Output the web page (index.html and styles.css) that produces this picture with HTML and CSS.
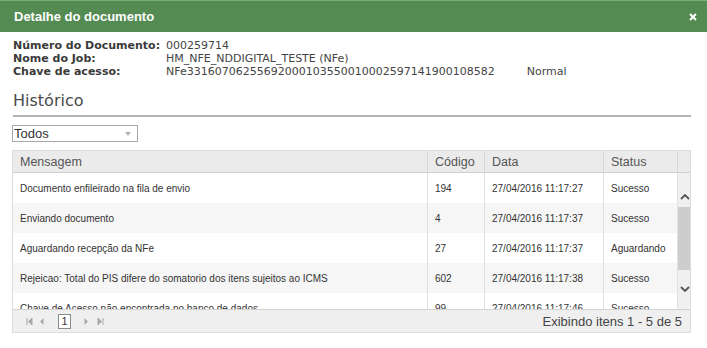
FILE: index.html
```html
<!DOCTYPE html>
<html lang="pt">

<head>
    <meta charset="UTF-8">
    <title>Detalhe do documento</title>
    <link rel="stylesheet" href="styles.css">
</head>

<body>

    <div class="window">
        <div class="titlebar">
            <span class="title">Detalhe do documento</span>
            <svg class="close" width="8" height="8" viewBox="0 0 8 8">
                <path d="M1 1 L7 7 M7 1 L1 7" stroke="#fff" stroke-width="2"/>
            </svg>
        </div>

        <div class="content">
            <div class="info">
                <span class="label">Número do Documento:</span>
                <span class="value">000259714</span>
                <span class="label">Nome do Job:</span>
                <span class="value">HM_NFE_NDDIGITAL_TESTE (NFe)</span>
                <span class="label">Chave de acesso:</span>
                <span class="value">NFe33160706255692000103550010002597141900108582<span class="tipo">Normal</span></span>
            </div>

            <h2 class="section">Histórico</h2>

            <div class="dropdown">
                <span>Todos</span>
                <span class="arrow"></span>
            </div>

            <div class="grid">
                <div class="grid-head">
                    <div class="cell">Mensagem</div>
                    <div class="cell">Código</div>
                    <div class="cell">Data</div>
                    <div class="cell">Status</div>
                    <div class="cell"></div>
                </div>
                <div class="grid-body">
                    <div class="rows">
                        <div class="row">
                            <div class="cell">Documento enfileirado na fila de envio</div>
                            <div class="cell">194</div>
                            <div class="cell">27/04/2016 11:17:27</div>
                            <div class="cell">Sucesso</div>
                        </div>
                        <div class="row alt">
                            <div class="cell">Enviando documento</div>
                            <div class="cell">4</div>
                            <div class="cell">27/04/2016 11:17:37</div>
                            <div class="cell">Sucesso</div>
                        </div>
                        <div class="row">
                            <div class="cell">Aguardando recepção da NFe</div>
                            <div class="cell">27</div>
                            <div class="cell">27/04/2016 11:17:37</div>
                            <div class="cell">Aguardando</div>
                        </div>
                        <div class="row alt">
                            <div class="cell">Rejeicao: Total do PIS difere do somatorio dos itens sujeitos ao ICMS</div>
                            <div class="cell">602</div>
                            <div class="cell">27/04/2016 11:17:38</div>
                            <div class="cell">Sucesso</div>
                        </div>
                        <div class="row">
                            <div class="cell">Chave de Acesso não encontrada no banco de dados</div>
                            <div class="cell">99</div>
                            <div class="cell">27/04/2016 11:17:46</div>
                            <div class="cell">Sucesso</div>
                        </div>
                    </div>
                    <div class="scrollbar">
                        <svg class="chev" width="10" height="6" viewBox="0 0 10 6">
                            <path d="M1 5 L5 1 L9 5" fill="none" stroke="#555" stroke-width="1.8"/>
                        </svg>
                        <div class="thumb"></div>
                        <svg class="chev down" width="10" height="6" viewBox="0 0 10 6">
                            <path d="M1 1 L5 5 L9 1" fill="none" stroke="#555" stroke-width="1.8"/>
                        </svg>
                    </div>
                </div>
                <div class="pager">
                    <div class="pager-nav">
                        <svg width="7" height="7" viewBox="0 0 7 7"><path d="M1 0 V7 M6 0 L2.5 3.5 L6 7 Z" stroke="#aaa" fill="#aaa"/></svg>
                        <svg width="5" height="7" viewBox="0 0 5 7"><path d="M4.5 0 L1 3.5 L4.5 7 Z" fill="#aaa"/></svg>
                        <span class="page">1</span>
                        <svg width="5" height="7" viewBox="0 0 5 7"><path d="M0.5 0 L4 3.5 L0.5 7 Z" fill="#aaa"/></svg>
                        <svg class="last" width="7" height="7" viewBox="0 0 7 7"><path d="M6 0 V7 M1 0 L4.5 3.5 L1 7 Z" stroke="#aaa" fill="#aaa"/></svg>
                    </div>
                    <span class="summary">Exibindo itens 1 - 5 de 5</span>
                </div>
            </div>
        </div>
    </div>

</body>

</html>
```

FILE: styles.css
```css
body {
    margin: 0;
    background: #fff;
    font-family: "Liberation Sans", Arial, sans-serif;
    color: #333;
}

.titlebar {
    height: 32px;
    background-color: #538b52;
    border-top: 1px solid #7ea97d;
    box-sizing: border-box;
    display: flex;
    align-items: center;
    justify-content: space-between;
    padding: 0 10px 0 14px;
}

.title {
    color: #fff;
    font-weight: bold;
    font-size: 13px;
}

.content {
    padding: 7px 16px 0 12px;
}

.info {
    display: grid;
    grid-template-columns: 153px auto;
    font-family: "DejaVu Sans", Verdana, sans-serif;
    font-size: 11px;
    line-height: 13px;
    padding-left: 1px;
}

.label {
    font-weight: bold;
    color: #3a3a3a;
}

.value {
    color: #444;
}

.tipo {
    margin-left: 32px;
}

.section {
    margin: 13px 0 0 1px;
    padding-bottom: 4px;
    font-family: "DejaVu Sans", Verdana, sans-serif;
    font-size: 16px;
    line-height: 20px;
    font-weight: normal;
    color: #4a4a4a;
    border-bottom: 2px solid #b4b4b4;
}

.dropdown {
    width: 123px;
    height: 15px;
    margin-top: 8px;
    border: 1px solid #a9a9a9;
    display: flex;
    align-items: center;
    justify-content: space-between;
    font-size: 13px;
    color: #333;
    padding-left: 1px;
}

.arrow {
    width: 0;
    height: 0;
    margin-right: 6px;
    border-left: 3px solid transparent;
    border-right: 3px solid transparent;
    border-top: 4px solid #b5b5b5;
}

.grid {
    margin-top: 8px;
    border: 1px solid #dcdcdc;
}

.grid-head,
.row {
    display: grid;
    grid-template-columns: 414px 57px 119px 74px;
}

.grid-head {
    grid-template-columns: 414px 57px 119px 74px 1fr;
    height: 21px;
    background: #ebebeb;
    border-bottom: 1px solid #cfcfcf;
    font-size: 12.5px;
    color: #555;
}

.grid-head .cell {
    display: flex;
    align-items: center;
    padding-left: 7px;
    border-left: 1px solid #d6d6d6;
}

.grid-head .cell:first-child {
    border-left: none;
}

.grid-body {
    display: flex;
    height: 136px;
    overflow: hidden;
}

.rows {
    flex: 1;
}

.row {
    height: 30px;
    font-size: 10px;
    color: #333;
    background: #fff;
}

.row.alt {
    background: #f6f6f6;
}

.row .cell {
    display: flex;
    align-items: center;
    padding-left: 7px;
    border-left: 1px solid #dedede;
    white-space: nowrap;
    overflow: hidden;
}

.row .cell:first-child {
    border-left: none;
}

.scrollbar {
    width: 14px;
    background: #f0f0f0;
    border-left: 1px solid #e2e2e2;
    display: flex;
    flex-direction: column;
    align-items: center;
}

.chev {
    margin-top: 21px;
    flex: none;
}

.thumb {
    width: 14px;
    height: 63px;
    margin-top: 7px;
    flex: none;
    background: #cdcdcd;
}

.chev.down {
    margin-top: 16px;
}

.pager {
    height: 22px;
    background: #efefef;
    border-top: 1px solid #d2d2d2;
    display: flex;
    align-items: center;
    justify-content: space-between;
    padding: 0 8px 0 13px;
}

.pager-nav {
    display: flex;
    align-items: center;
    gap: 6px;
}

.page {
    width: 11px;
    height: 13px;
    margin: 0 7px 0 8px;
    border: 1px solid #8a8a8a;
    background: #fff;
    font-size: 11px;
    color: #333;
    display: flex;
    align-items: center;
    justify-content: center;
}

.last {
    margin-left: 2px;
}

.summary {
    font-size: 13px;
    color: #444;
}
```
